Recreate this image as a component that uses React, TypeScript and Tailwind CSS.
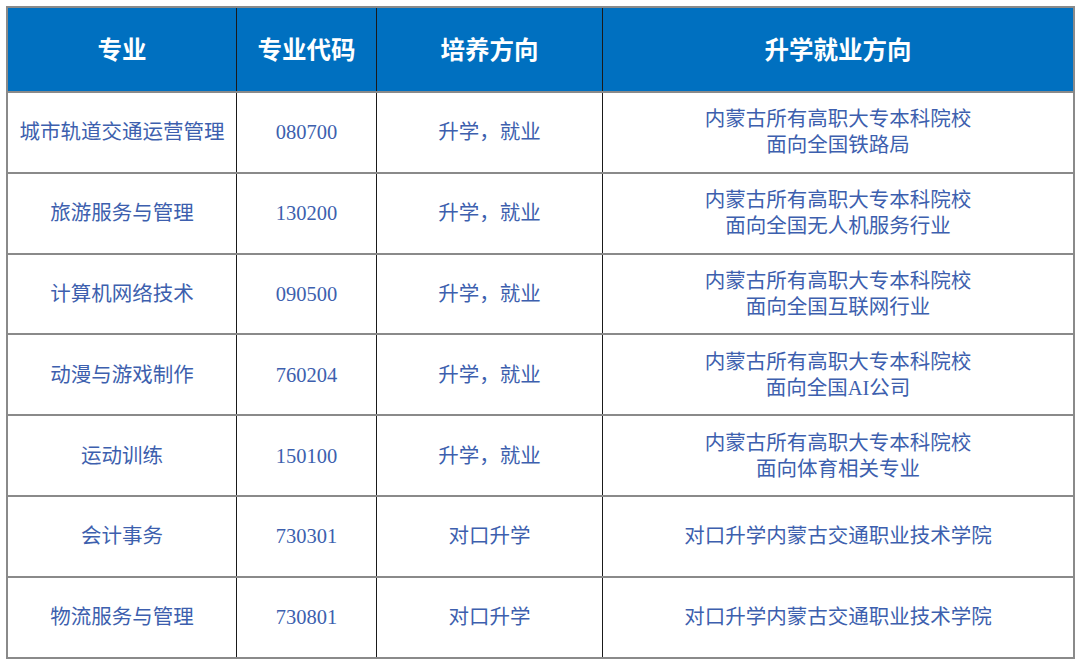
const rows = [
  { name: "城市轨道交通运营管理", code: "080700", dir: "升学，就业", out: ["内蒙古所有高职大专本科院校", "面向全国铁路局"] },
  { name: "旅游服务与管理", code: "130200", dir: "升学，就业", out: ["内蒙古所有高职大专本科院校", "面向全国无人机服务行业"] },
  { name: "计算机网络技术", code: "090500", dir: "升学，就业", out: ["内蒙古所有高职大专本科院校", "面向全国互联网行业"] },
  { name: "动漫与游戏制作", code: "760204", dir: "升学，就业", out: ["内蒙古所有高职大专本科院校", "面向全国AI公司"] },
  { name: "运动训练", code: "150100", dir: "升学，就业", out: ["内蒙古所有高职大专本科院校", "面向体育相关专业"] },
  { name: "会计事务", code: "730301", dir: "对口升学", out: ["对口升学内蒙古交通职业技术学院"] },
  { name: "物流服务与管理", code: "730801", dir: "对口升学", out: ["对口升学内蒙古交通职业技术学院"] },
];

const cols = "grid grid-cols-[229px_140px_226px_1fr]";
const serif = "font-['Liberation_Serif','Noto_Sans_CJK_SC',serif]";

export default function App() {
  return (
    <div className="h-[664px] w-[1080px] bg-white pl-[6px] pt-[6px]">
      <div className="w-[1069px] border-2 border-[#8a8a8a]">
        {/* 表头 */}
        <div className={`${cols} h-[83px] bg-[#0070c0] text-[24.5px] font-bold text-white font-['Noto_Sans_CJK_SC',sans-serif]`}>
          <div className="flex items-center justify-center border-r border-[#1a1a1a]">专业</div>
          <div className="flex items-center justify-center border-r border-[#1a1a1a]">专业代码</div>
          <div className="flex items-center justify-center border-r border-[#1a1a1a]">培养方向</div>
          <div className="flex items-center justify-center">升学就业方向</div>
        </div>

        {rows.map((r) => (
          <div
            key={r.code}
            className={`${cols} h-[80.8px] border-t-2 border-[#8a8a8a] text-[20.5px] leading-[26px] text-[#3d5fae] ${serif}`}
          >
            <div className="flex items-center justify-center border-r border-[#1a1a1a]">{r.name}</div>
            <div className="flex items-center justify-center border-r border-[#1a1a1a]">{r.code}</div>
            <div className="flex items-center justify-center border-r border-[#1a1a1a]">{r.dir}</div>
            <div className="flex flex-col items-center justify-center">
              {r.out.map((t) => (
                <span key={t}>{t}</span>
              ))}
            </div>
          </div>
        ))}
      </div>
    </div>
  );
}
